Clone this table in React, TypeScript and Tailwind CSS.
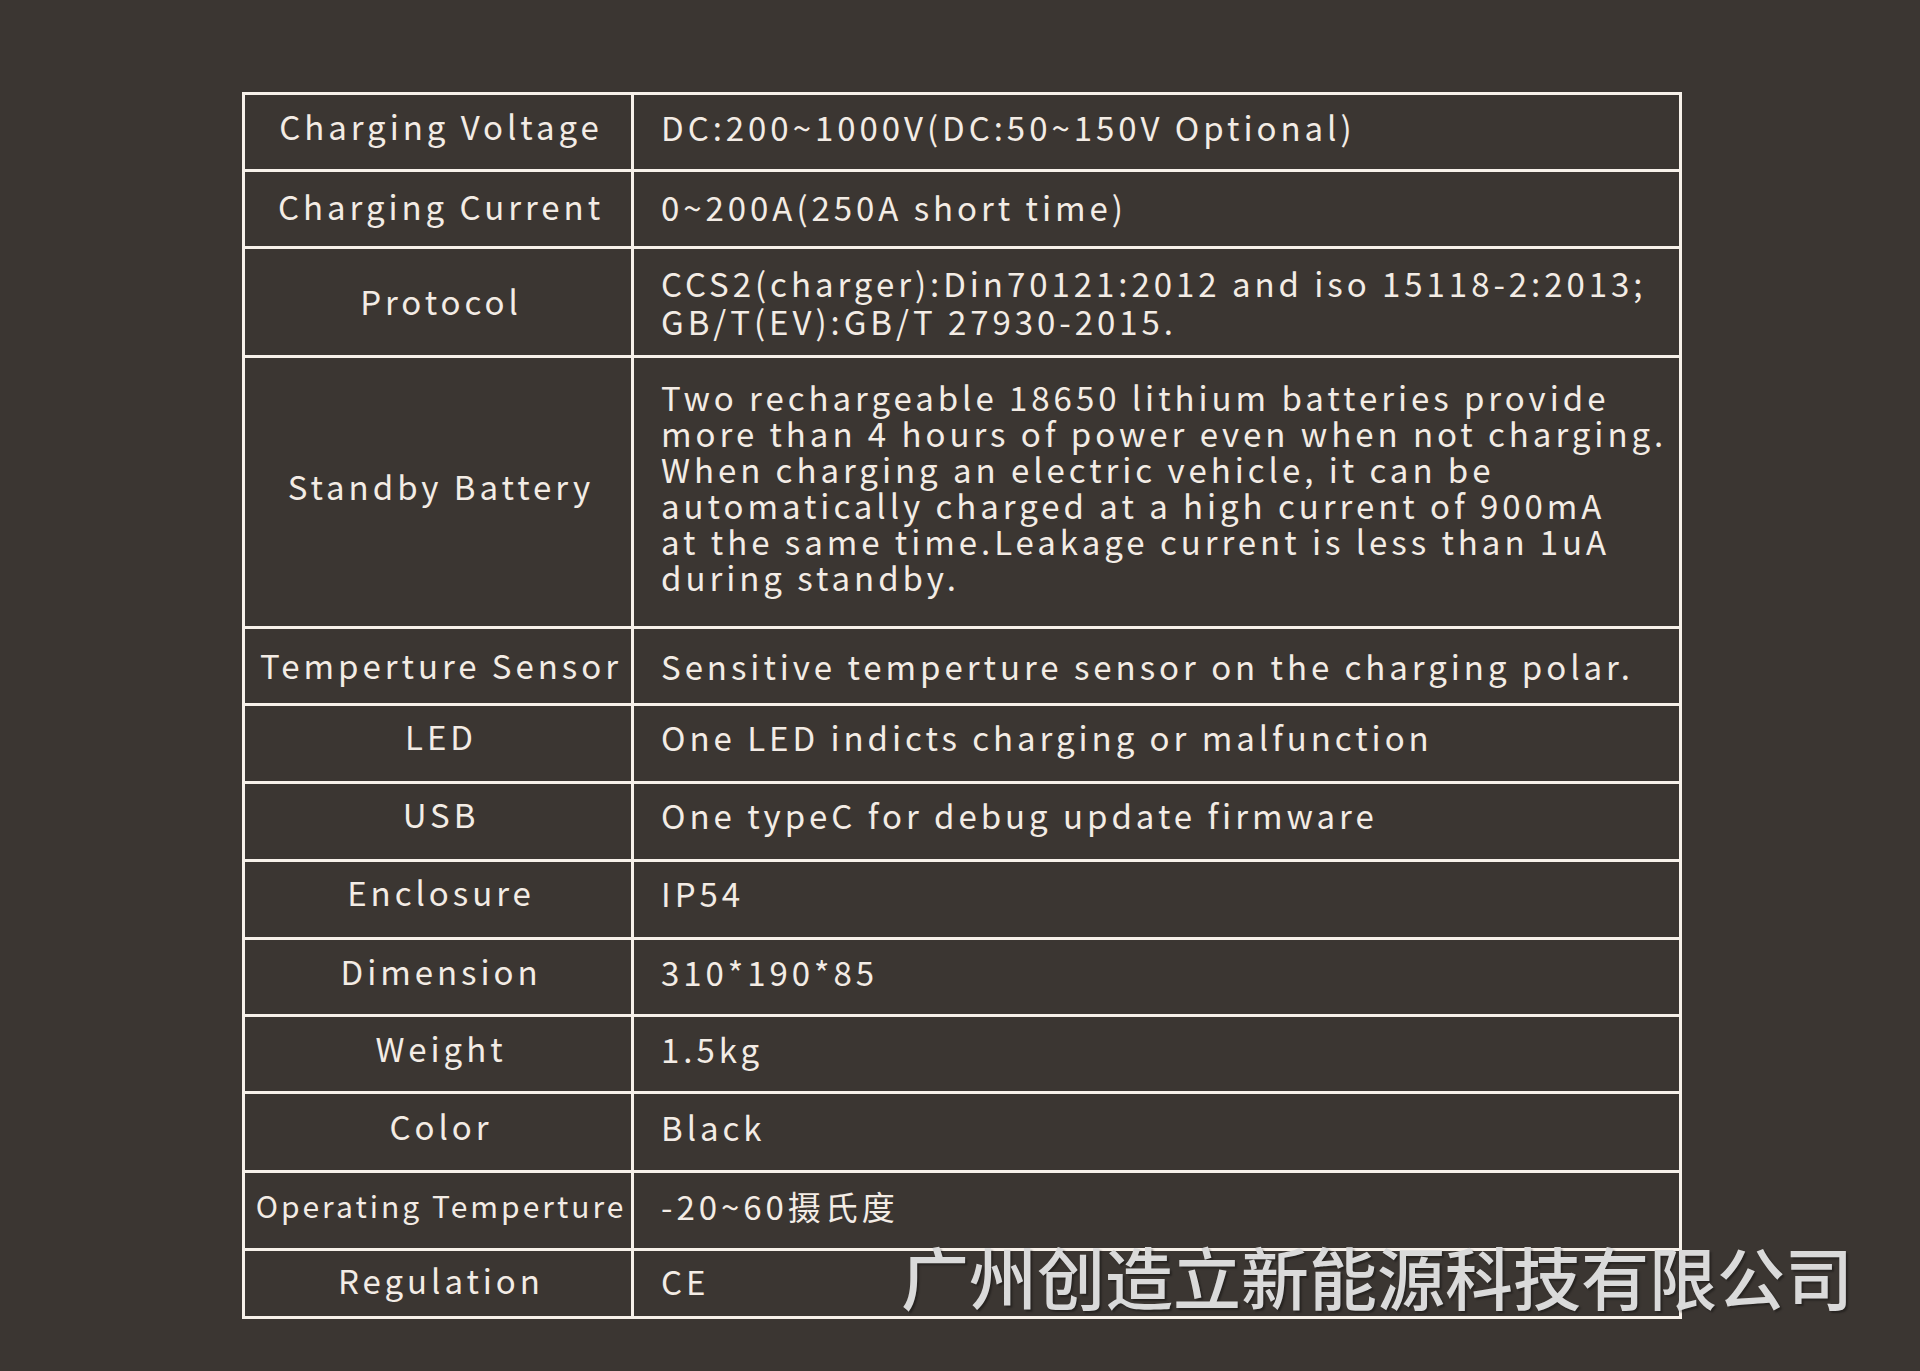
const rows: { label: string; value: string[]; h: string; small?: boolean; lead?: string; pb?: string }[] = [
  { label: "Charging Voltage", value: ["DC:200~1000V(DC:50~150V Optional)"], h: "h-[77px]" },
  { label: "Charging Current", value: ["0~200A(250A short time)"], h: "h-[77px]", pb: "pb-[4px]" },
  {
    label: "Protocol",
    value: ["CCS2(charger):Din70121:2012 and iso 15118-2:2013;", "GB/T(EV):GB/T 27930-2015."],
    h: "h-[109px]",
    lead: "leading-[38px]",
    pb: "pb-0",
  },
  {
    label: "Standby Battery",
    value: [
      "Two rechargeable 18650 lithium batteries provide",
      "more than 4 hours of power even when not charging.",
      "When charging an electric vehicle, it can be",
      "automatically charged at a high current of 900mA",
      "at the same time.Leakage current is less than 1uA",
      "during standby.",
    ],
    h: "h-[271px]",
  },
  {
    label: "Temperture Sensor",
    value: ["Sensitive temperture sensor on the charging polar."],
    h: "h-[77px]",
    pb: "pb-0",
  },
  { label: "LED", value: ["One LED indicts charging or malfunction"], h: "h-[78px]", pb: "pb-[14px]" },
  { label: "USB", value: ["One typeC for debug update firmware"], h: "h-[78px]", pb: "pb-[14px]" },
  { label: "Enclosure", value: ["IP54"], h: "h-[78px]", pb: "pb-[14px]" },
  { label: "Dimension", value: ["310*190*85"], h: "h-[77px]" },
  { label: "Weight", value: ["1.5kg"], h: "h-[77px]" },
  { label: "Color", value: ["Black"], h: "h-[79px]" },
  { label: "Operating Temperture", value: ["-20~60摄氏度"], h: "h-[78px]", small: true },
  { label: "Regulation", value: ["CE"], h: "h-[65px]", pb: "pb-[5px]" },
];

export default function App() {
  return (
    <div
      className="relative h-[1371px] w-[1920px] overflow-hidden bg-[#3b3632] pt-[92px] pl-[242px] text-[#f3ece5]"
      style={{ fontFamily: '"Noto Sans CJK SC", "Noto Sans", sans-serif' }}
    >
      <div className="w-[1440px] border-[3px] border-[#f7f1ea]">
        {rows.map((r, i) => (
          <div
            key={r.label}
            className={`flex ${r.h} ${i < rows.length - 1 ? "border-b-[3px] border-[#f7f1ea]" : ""}`}
          >
            <div
              className={`flex w-[389px] shrink-0 items-center justify-center border-r-[3px] border-[#f7f1ea] pl-[6px] whitespace-nowrap ${
                r.pb ?? "pb-[10px]"
              } ${r.small ? "text-[30px] tracking-[0.1em]" : "text-[33px] tracking-[0.12em]"}`}
            >
              {r.label}
            </div>
            <div
              className={`flex flex-1 flex-col justify-center pl-[27px] text-[33px] tracking-[0.12em] whitespace-nowrap ${
                r.pb ?? "pb-[10px]"
              } ${r.lead ?? "leading-[36px]"}`}
            >
              {r.value.map((line) => (
                <div key={line}>{line}</div>
              ))}
            </div>
          </div>
        ))}
      </div>
      <div className="absolute top-[1242px] left-[901px] text-[68px] leading-none font-medium whitespace-nowrap text-[#dadada] [text-shadow:2px_2px_2px_rgba(0,0,0,0.35)]">
        广州创造立新能源科技有限公司
      </div>
    </div>
  );
}
